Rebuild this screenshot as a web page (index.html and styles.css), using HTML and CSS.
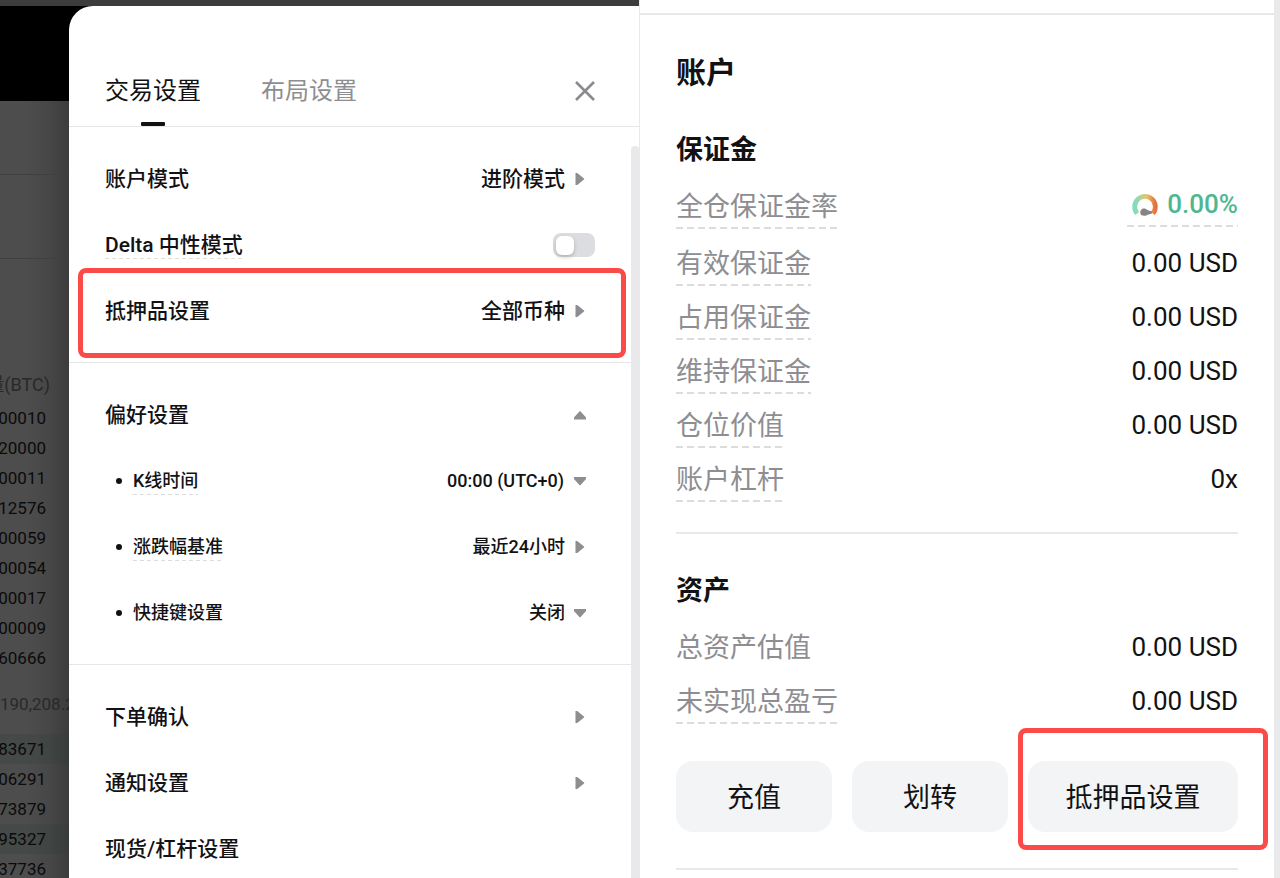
FILE: index.html
```html
<!DOCTYPE html>
<html lang="zh-CN">
<head>
    <meta charset="UTF-8">
    <meta name="viewport" content="width=device-width, initial-scale=1">
    <title>交易设置</title>
    <link rel="stylesheet" href="styles.css">
</head>
<body>

<svg class="sprite" width="0" height="0" aria-hidden="true">
    <symbol id="arrow-right" viewBox="0 0 12 12"><path d="M1.5 0h1.6l.8.4 6.1 5.1q.6.5 0 1L3.9 11.6l-.8.4H1.5z"/></symbol>
    <symbol id="arrow-down" viewBox="0 0 12 12"><path d="M0 2h12v1.8l-.4.6-5 5.7q-.6.6-1.2 0l-5-5.7L0 3.8z"/></symbol>
    <symbol id="arrow-up" viewBox="0 0 12 12"><path d="M0 10.4h12V8.7l-.4-.6-5-5.7q-.6-.6-1.2 0l-5 5.7-.4.6z"/></symbol>
</svg>

<div class="screen">

    <section class="trade">
        <div class="topbar"></div>
        <div class="trade-main">

            <!-- Libro de órdenes, detrás del panel -->
            <aside class="book">
                <div class="book-header"></div>
                <div class="book-block"></div>
                <div class="book-block book-block-tall"></div>
                <div class="book-fill">
                    <p class="book-label">量(BTC)</p>
                    <ul class="book-list">
                        <li>00010</li>
                        <li>20000</li>
                        <li>00011</li>
                        <li>12576</li>
                        <li>00059</li>
                        <li>00054</li>
                        <li>00017</li>
                        <li>00009</li>
                        <li>60666</li>
                    </ul>
                    <p class="book-total">190,208.2</p>
                    <ul class="book-list">
                        <li class="hit">83671</li>
                        <li>06291</li>
                        <li>73879</li>
                        <li class="hit">95327</li>
                        <li>37736</li>
                    </ul>
                </div>
            </aside>

            <div class="drawer">
                <header class="drawer-header">
                    <button type="button" class="tab active">交易设置</button>
                    <button type="button" class="tab">布局设置</button>
                    <button type="button" class="close" aria-label="关闭">
                        <svg width="22" height="22" viewBox="0 0 22 22"><path d="M2 2l18 18M20 2L2 20" fill="none" stroke="#8a8a8f" stroke-width="2.6"/></svg>
                    </button>
                </header>

                <div class="drawer-body">
                    <div class="settings">
                        <div class="group">
                            <div class="row">
                                <span>账户模式</span>
                                <button type="button" class="value">进阶模式<svg class="arrow"><use href="#arrow-right"/></svg></button>
                            </div>
                            <div class="row">
                                <label for="delta" class="hint">Delta 中性模式</label>
                                <input type="checkbox" id="delta" class="switch">
                            </div>
                            <div class="row marked">
                                <span>抵押品设置</span>
                                <button type="button" class="value">全部币种<svg class="arrow"><use href="#arrow-right"/></svg></button>
                            </div>
                        </div>

                        <div class="group">
                            <div class="row">
                                <span>偏好设置</span>
                                <button type="button" class="value" aria-label="收起"><svg class="arrow"><use href="#arrow-up"/></svg></button>
                            </div>
                            <div class="row sub">
                                <label for="kline" class="hint">K线时间</label>
                                <div class="value">
                                    <select id="kline"><option>00:00 (UTC+0)</option></select>
                                    <svg class="arrow"><use href="#arrow-down"/></svg>
                                </div>
                            </div>
                            <div class="row sub">
                                <span class="hint">涨跌幅基准</span>
                                <button type="button" class="value">最近24小时<svg class="arrow"><use href="#arrow-right"/></svg></button>
                            </div>
                            <div class="row sub">
                                <label for="hotkey">快捷键设置</label>
                                <div class="value">
                                    <select id="hotkey"><option>关闭</option></select>
                                    <svg class="arrow"><use href="#arrow-down"/></svg>
                                </div>
                            </div>
                        </div>

                        <div class="group">
                            <div class="row">
                                <span>下单确认</span>
                                <button type="button" class="value" aria-label="下单确认"><svg class="arrow"><use href="#arrow-right"/></svg></button>
                            </div>
                            <div class="row">
                                <span>通知设置</span>
                                <button type="button" class="value" aria-label="通知设置"><svg class="arrow"><use href="#arrow-right"/></svg></button>
                            </div>
                            <div class="row">
                                <span>现货/杠杆设置</span>
                            </div>
                        </div>
                    </div>
                    <div class="scrollbar"></div>
                </div>
            </div>
        </div>
    </section>

    <section class="account">
        <div class="account-body">
            <h1>账户</h1>

            <h2>保证金</h2>
            <dl class="stats">
                <div class="stat stat-rate">
                    <dt class="dashed">全仓保证金率</dt>
                    <dd class="rate dashed">
                        <svg width="26" height="26" viewBox="0 0 26 26">
                            <defs>
                                <linearGradient id="gauge" x1="0" x2="1" y1="0" y2="0">
                                    <stop offset="0" stop-color="#7fdcc0"/>
                                    <stop offset=".35" stop-color="#b9d28c"/>
                                    <stop offset=".6" stop-color="#ecc268"/>
                                    <stop offset="1" stop-color="#e2703f"/>
                                </linearGradient>
                            </defs>
                            <path d="M5.200 22.500A10.300 10.300 0 1 1 20.800 22.500" fill="none" stroke="url(#gauge)" stroke-width="4.800"/>
                            <path d="M20 20.400v2.200l-5 1.300c-1.600 1.500-6 1.300-6.600-1.300-.5-3 1.200-5 3.600-5 1.600 0 2.400.5 3.200 1.500z" fill="#858585"/>
                        </svg>
                        0.00%
                    </dd>
                </div>
                <div class="stat"><dt class="dashed">有效保证金</dt><dd>0.00 USD</dd></div>
                <div class="stat"><dt class="dashed">占用保证金</dt><dd>0.00 USD</dd></div>
                <div class="stat"><dt class="dashed">维持保证金</dt><dd>0.00 USD</dd></div>
                <div class="stat"><dt class="dashed">仓位价值</dt><dd>0.00 USD</dd></div>
                <div class="stat"><dt class="dashed">账户杠杆</dt><dd>0x</dd></div>
            </dl>

            <h2 class="split">资产</h2>
            <dl class="stats">
                <div class="stat"><dt>总资产估值</dt><dd>0.00 USD</dd></div>
                <div class="stat"><dt class="dashed">未实现总盈亏</dt><dd>0.00 USD</dd></div>
            </dl>

            <div class="actions">
                <button type="button">充值</button>
                <button type="button">划转</button>
                <button type="button" class="wide marked">抵押品设置</button>
            </div>
        </div>
        <div class="edge"></div>
    </section>

</div>

</body>
</html>
```
FILE: styles.css
```css
* { box-sizing: border-box; }
body {
    margin: 0;
    font-family: Roboto, "Noto Sans CJK SC", sans-serif;
    color: #121214;
    background-color: #fff;
}
h1, h2, p, ul, dl, dd { margin: 0; padding: 0; }
button, select {
    margin: 0;
    padding: 0;
    border: none;
    background: none;
    color: inherit;
    font: inherit;
    cursor: pointer;
}
.sprite { position: absolute; }

.screen {
    display: grid;
    grid-template-columns: 1fr 1fr;
    height: 100vh;
    overflow: hidden;
}

/* Trading page under the drawer */
.trade {
    display: flex;
    flex-direction: column;
    min-width: 0;
    min-height: 0;
    border-right: 1px solid #e9e9eb;
    background-color: #000;
}
.topbar {
    flex: none;
    height: 6px;
    background-color: #3c3c3c;
}
.trade-main {
    display: flex;
    flex: 1;
    min-height: 0;
}
.book {
    display: flex;
    flex-direction: column;
    flex: none;
    width: 69px;
    overflow: hidden;
    font-size: 17px;
    line-height: 30px;
    color: #0a0a0a;
    background: linear-gradient(to right, #4d4d4d 40%, #474747 70%, #3c3c3c);
}
.book-header {
    flex: none;
    height: 95px;
    background-color: #000;
}
.book-block {
    flex: none;
    height: 74px;
    border-bottom: 1px solid #404040;
}
.book-block-tall { height: 84px; }
.book-fill { padding-top: 111px; }
.book-label {
    display: flex;
    justify-content: flex-end;
    padding-right: 19px;
    margin-bottom: 3px;
    font-size: 18px;
    color: #292929;
    white-space: nowrap;
}
.book-total {
    margin: 16px 0 15px;
    color: #292929;
}
.book-list { list-style: none; }
.book-list li {
    display: flex;
    justify-content: flex-end;
    padding-right: 23px;
}
.book-list .hit { background-color: rgba(40, 60, 50, 0.2); }

/* Settings drawer */
.drawer {
    display: flex;
    flex-direction: column;
    flex: 1;
    min-width: 0;
    border-top-left-radius: 24px;
    background-color: #fff;
    overflow: hidden;
}
.drawer-header {
    display: flex;
    align-items: flex-start;
    gap: 60px;
    padding: 67px 43px 0 36px;
    border-bottom: 1px solid #e6e6e6;
}
.tab {
    display: flex;
    flex-direction: column;
    align-items: center;
    gap: 13px;
    font-size: 24px;
    line-height: 36px;
    color: #8e8e92;
}
.tab::after {
    content: "";
    width: 24px;
    height: 4px;
    border-radius: 1px;
}
.tab.active { color: #121214; }
.tab.active::after { background-color: #121214; }
.close {
    display: flex;
    align-items: center;
    height: 36px;
    margin-left: auto;
}
.drawer-body {
    display: flex;
    flex: 1;
    min-height: 0;
}
.settings {
    flex: 1;
    overflow: hidden;
    font-size: 21px;
    font-weight: 500;
}
.scrollbar {
    width: 8px;
    margin-top: 19px;
    border-radius: 4px 4px 0 0;
    background-color: #e9e9eb;
}
.group {
    padding: 19px 0 18px;
    border-bottom: 1px solid #e6e6e6;
}
.row {
    display: flex;
    align-items: center;
    justify-content: space-between;
    height: 66px;
    padding: 0 36px;
    line-height: 26px;
}
.row.sub {
    gap: 11px;
    padding-left: 47px;
    font-size: 18px;
}
.row.sub::before {
    content: "";
    width: 6px;
    height: 6px;
    border-radius: 50%;
    background-color: #121214;
}
.value {
    display: flex;
    align-items: center;
    margin-left: auto;
}
.value select {
    appearance: none;
    outline: none;
}
.arrow {
    width: 30px;
    height: 12px;
    fill: #8e8e92;
}
.hint {
    padding-bottom: 1px;
    background: repeating-linear-gradient(to right, #dcdcdc 0 4px, transparent 4px 7px) bottom / 100% 1px no-repeat;
}
.switch {
    display: flex;
    align-items: center;
    appearance: none;
    width: 42px;
    height: 24px;
    margin: 0;
    padding: 0 3px;
    border-radius: 8px;
    background-color: #dcdde0;
    cursor: pointer;
}
.switch::before {
    content: "";
    width: 18px;
    height: 19px;
    border-radius: 6px;
    background-color: #fff;
    box-shadow: 0 2px 4px rgba(0, 0, 0, 0.2);
}
.switch:checked { justify-content: flex-end; }

/* Red frame around the highlighted controls */
.marked { position: relative; }
.marked::after {
    content: "";
    position: absolute;
    border: 5px solid #fa4b48;
    border-radius: 8px;
    pointer-events: none;
}
.row.marked::after { inset: -10px 5px -14px 9px; }
.actions .marked::after { inset: -33px -30px -18px -10px; }

/* Account panel */
.account {
    display: flex;
    min-width: 0;
    overflow: hidden;
}
.account-body {
    flex: 1;
    margin-top: 13px;
    padding: 36px 36px 0;
    border-top: 2px solid #e8e8e8;
}
.edge {
    width: 6px;
    background-color: #e9eaec;
}
h1 {
    font-size: 30px;
    font-weight: 700;
    line-height: 44px;
}
h2 {
    margin-top: 35px;
    font-size: 27px;
    font-weight: 700;
    line-height: 40px;
}
h2.split {
    margin-top: 30px;
    padding-top: 37px;
    border-top: 2px solid #e8e8e8;
}
.stats {
    display: flex;
    flex-direction: column;
    gap: 13px;
    margin-top: 18px;
}
.stat {
    display: flex;
    align-items: flex-start;
    justify-content: space-between;
    height: 41px;
    line-height: 38px;
}
.stat-rate { margin-bottom: 3px; }
.stat dt {
    font-size: 27px;
    color: #8e8e92;
}
.stat dd {
    font-size: 26px;
    line-height: 36px;
}
.dashed {
    padding-bottom: 3px;
    background: repeating-linear-gradient(to right, #dcdcdc 0 7px, transparent 7px 11px) bottom / 100% 2px no-repeat;
}
.stat .rate {
    display: flex;
    align-items: center;
    gap: 9px;
    padding: 0 0 7px 5px;
    font-weight: 500;
    line-height: 32px;
    color: #4fb78f;
}
.actions {
    display: flex;
    gap: 20px;
    margin-top: 37px;
    padding-bottom: 36px;
    border-bottom: 2px solid #e8e8e8;
}
.actions button {
    flex: 156;
    height: 71px;
    padding-bottom: 3px;
    border-radius: 17px;
    font-size: 27px;
    background-color: #f3f4f6;
}
.actions .wide { flex: 210; }
```
